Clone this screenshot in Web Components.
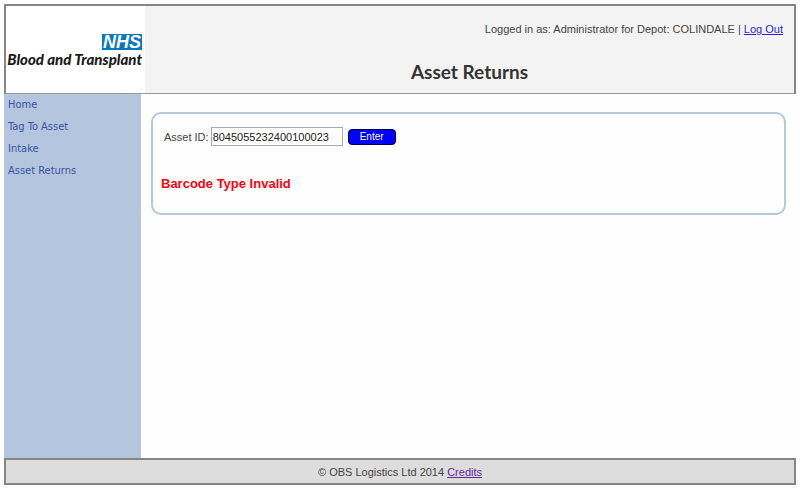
<!DOCTYPE html>
<html lang="en">
<head>
<meta charset="utf-8">
<title>Asset Returns</title>
<style>
  body {
    margin: 0;
    background: #fefefe;
    color: #444;
    font: 11px/16px "Liberation Sans", Arial, sans-serif;
  }
</style>
</head>
<body>
<asset-app>
  <page-header slot="header" heading="Asset Returns">Logged in as: Administrator for Depot: COLINDALE</page-header>
  <side-menu slot="menu" items="Home,Tag To Asset,Intake,Asset Returns"></side-menu>
  <asset-form value="8045055232400100023">Barcode Type Invalid</asset-form>
  <page-footer slot="footer">© OBS Logistics Ltd 2014</page-footer>
</asset-app>

<script>
class AssetApp extends HTMLElement {
    constructor() {
        super();
        this.attachShadow({ mode: 'open' });
    }

    connectedCallback() {
        this.shadowRoot.innerHTML = `
      <style>
        :host {
          display: flex;
          flex-direction: column;
          box-sizing: border-box;
          min-height: 100vh;
          padding: 4px 4px 3px;
        }
        .middle {
          display: flex;
          flex: 1;
        }
        main {
          flex: 1;
          padding: 18px 10px;
        }
      </style>
      <slot name="header"></slot>
      <div class="middle">
        <slot name="menu"></slot>
        <main><slot></slot></main>
      </div>
      <slot name="footer"></slot>
    `;
    }
}

class NhsLogo extends HTMLElement {
    constructor() {
        super();
        this.attachShadow({ mode: 'open' });
    }

    connectedCallback() {
        this.shadowRoot.innerHTML = `
      <style>
        :host {
          display: flex;
          flex-direction: column;
          align-items: flex-end;
          justify-content: center;
          box-sizing: border-box;
          width: 139px;
          padding: 2px 3px 0 0;
          background: #fff;
          color: #1c1c1c;
          font: italic 900 15px/18px Lato, sans-serif;
          white-space: nowrap;
        }
        .badge {
          width: 40px;
          background: #0b78bf;
          color: #fff;
          font: italic bold 18px/16px "Liberation Sans", Arial, sans-serif;
          text-align: center;
        }
      </style>
      <span class="badge">NHS</span>
      <span>Blood and Transplant</span>
    `;
    }
}

class PageHeader extends HTMLElement {
    constructor() {
        super();
        this.attachShadow({ mode: 'open' });
    }

    connectedCallback() {
        this.shadowRoot.innerHTML = `
      <style>
        :host {
          display: flex;
          box-sizing: border-box;
          min-height: 90px;
          border: 2px solid #858585;
          border-bottom: 1px solid #999;
          background: #f3f3f3;
        }
        .info {
          flex: 1;
          padding-top: 15px;
        }
        .login {
          padding-right: 11px;
          text-align: right;
        }
        a { color: #2a1ee8; }
        h1 {
          margin: 24px 0 0;
          color: #333;
          font: 700 19px/22px Lato, Calibri, sans-serif;
          text-align: center;
        }
      </style>
      <nhs-logo></nhs-logo>
      <div class="info">
        <div class="login"><slot></slot> | <a href="#logout">Log Out</a></div>
        <h1>${this.getAttribute('heading')}</h1>
      </div>
    `;
    }
}

class SideMenu extends HTMLElement {
    constructor() {
        super();
        this.attachShadow({ mode: 'open' });
    }

    connectedCallback() {
        const links = this.getAttribute('items').split(',')
            .map(item => `<a href="#${item.toLowerCase().replace(/ /g, '-')}">${item}</a>`)
            .join('');
        this.shadowRoot.innerHTML = `
      <style>
        :host {
          display: block;
          box-sizing: border-box;
          width: 137px;
          padding: 0 4px;
          background: #b4c6df;
        }
        nav {
          display: grid;
        }
        a {
          color: #3553a0;
          font: 11px/22px "DejaVu Sans Condensed", Tahoma, sans-serif;
          text-decoration: none;
        }
      </style>
      <nav>${links}</nav>
    `;
    }
}

class AssetForm extends HTMLElement {
    constructor() {
        super();
        this.attachShadow({ mode: 'open' });
    }

    connectedCallback() {
        this.shadowRoot.innerHTML = `
      <style>
        :host {
          display: block;
          box-sizing: border-box;
          min-height: 103px;
          padding: 13px 8px 20px;
          border: 2px solid #b6c7de;
          border-radius: 10px;
        }
        form {
          display: flex;
          align-items: center;
          padding-left: 3px;
        }
        input {
          box-sizing: border-box;
          width: 132px;
          height: 19px;
          margin: 0 5px 0 2px;
          padding: 0 1px;
          border: 1px solid #aaa;
          background: #fff;
          color: #222;
          font: 11px "Liberation Sans", Arial, sans-serif;
        }
        button {
          width: 48px;
          height: 16px;
          padding: 0;
          border: 1px solid #000050;
          border-radius: 4px;
          background: #00f;
          color: #fff;
          font: 10px "Liberation Sans", Arial, sans-serif;
        }
        .error {
          margin: 29px 0 0;
          color: #ff0010;
          font-size: 13px;
          font-weight: bold;
          line-height: 18px;
        }
      </style>
      <form>
        <label for="asset">Asset ID:</label>
        <input id="asset" type="text" value="${this.getAttribute('value')}">
        <button type="button">Enter</button>
      </form>
      <p class="error" role="alert"><slot></slot></p>
    `;
    }
}

class PageFooter extends HTMLElement {
    constructor() {
        super();
        this.attachShadow({ mode: 'open' });
    }

    connectedCallback() {
        this.shadowRoot.innerHTML = `
      <style>
        :host {
          display: block;
          padding: 4px 0 3px;
          border: 2px solid #858585;
          background: #ddd;
          text-align: center;
        }
        a { color: #63259a; }
      </style>
      <slot></slot> <a href="#credits">Credits</a>
    `;
    }
}

customElements.define('asset-app', AssetApp);
customElements.define('nhs-logo', NhsLogo);
customElements.define('page-header', PageHeader);
customElements.define('side-menu', SideMenu);
customElements.define('asset-form', AssetForm);
customElements.define('page-footer', PageFooter);
</script>
</body>
</html>
